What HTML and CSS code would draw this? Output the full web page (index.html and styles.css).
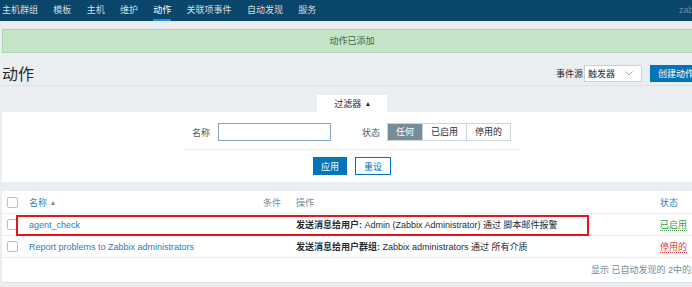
FILE: index.html
```html
<!DOCTYPE html>
<html lang="zh">
<head>
  <meta charset="UTF-8">
  <title>动作</title>
  <link rel="stylesheet" href="styles.css">
</head>
<body>
  <header class="topbar">
    <ul class="topnav">
      <li>主机群组</li>
      <li>模板</li>
      <li>主机</li>
      <li>维护</li>
      <li class="active">动作</li>
      <li>关联项事件</li>
      <li>自动发现</li>
      <li>服务</li>
    </ul>
    <span class="user">zabbix</span>
  </header>

  <main class="page">
    <div class="msg-good">动作已添加</div>

    <div class="page-head">
      <h1>动作</h1>
      <div class="head-controls">
        <label>事件源</label>
        <div class="select">
          <span>触发器</span>
          <svg width="8" height="5" viewBox="0 0 8 5"><polyline points="0.5,0.5 4,4 7.5,0.5" fill="none" stroke="#9aa7b0" stroke-width="1"/></svg>
        </div>
        <button class="btn">创建动作</button>
      </div>
    </div>

    <div class="filter">
      <div class="filter-tab">过滤器 <span class="tri"></span></div>
      <div class="filter-body">
        <div class="filter-grid">
          <label>名称</label>
          <input type="text" class="text-input">
          <label class="second">状态</label>
          <div class="radio-group">
            <span class="on">任何</span>
            <span>已启用</span>
            <span>停用的</span>
          </div>
        </div>
        <div class="filter-buttons">
          <button class="btn">应用</button>
          <button class="btn-alt">重设</button>
        </div>
      </div>
    </div>

    <div class="list">
      <table>
        <colgroup>
          <col class="c-check"><col class="c-name"><col class="c-cond"><col class="c-ops"><col class="c-status">
        </colgroup>
        <thead>
          <tr>
            <th><span class="checkbox"></span></th>
            <th class="sort">名称 <span class="tri"></span></th>
            <th>条件</th>
            <th>操作</th>
            <th class="sort">状态</th>
          </tr>
        </thead>
        <tbody>
          <tr>
            <td><span class="checkbox"></span></td>
            <td><a href="#">agent_check</a></td>
            <td></td>
            <td><b>发送消息给用户:</b> Admin (Zabbix Administrator) 通过 脚本邮件报警</td>
            <td><span class="status ok">已启用</span></td>
          </tr>
          <tr>
            <td><span class="checkbox"></span></td>
            <td><a href="#">Report problems to Zabbix administrators</a></td>
            <td></td>
            <td><b>发送消息给用户群组:</b> Zabbix administrators 通过 所有介质</td>
            <td><span class="status off">停用的</span></td>
          </tr>
        </tbody>
      </table>
      <div class="list-footer">显示 已自动发现的 2中的2</div>
      <div class="highlight"></div>
    </div>
  </main>
</body>
</html>
```

FILE: styles.css
```css
body { margin: 0; overflow: hidden; background: #ebeef0; font-family: "Liberation Sans", "Noto Sans CJK SC", sans-serif; font-size: 9px; color: #1f2c33; }

.topbar { display: flex; width: 712px; height: 21px; background: #0a466a; }
.topnav { display: flex; gap: 15.3px; margin: 0; padding: 0 0 0 2px; list-style: none; }
.topnav li { height: 21px; box-sizing: border-box; padding-top: 1px; line-height: 18px; border-bottom: 2px solid transparent; color: #d3dde4; }
.topnav li.active { color: #ffffff; border-bottom-color: #1d8fdc; }
.user { margin-left: auto; padding-right: 7px; line-height: 20px; color: #6f8ba0; }

.page { width: 700px; margin-left: 2px; }

.msg-good { margin-top: 8px; height: 24px; box-sizing: border-box; border: 1px solid #aed5b0; background: #c5e4c7; color: #42654a; text-align: center; line-height: 22px; }

.page-head { display: flex; align-items: center; height: 33px; box-sizing: border-box; padding-top: 8px; border-bottom: 1px solid #dde2e6; }
.page-head h1 { margin: 0; padding-top: 3px; font-size: 16px; font-weight: normal; line-height: 20px; color: #1f2c33; }
.head-controls { display: flex; align-items: center; margin-left: auto; }
.head-controls label { margin-right: 1px; color: #1f2c33; }
.select { display: flex; align-items: center; justify-content: space-between; width: 58px; height: 17px; box-sizing: border-box; padding: 0 8px 0 3px; border: 1px solid #c9d2d8; background: #fff; }
.btn { height: 17px; padding: 0 8px; margin-left: 8px; border: none; background: #0275b8; color: #fff; font: inherit; }

.tri { display: inline-block; width: 0; height: 0; border-left: 2.5px solid transparent; border-right: 2.5px solid transparent; border-bottom: 4px solid currentColor; vertical-align: 1px; }

.filter { margin-top: 9px; }
.filter-tab { width: 70px; height: 17px; margin: 0 auto; background: #fff; text-align: center; line-height: 18px; color: #1f2c33; }
.filter-tab .tri { margin-left: 2px; color: #1f2c33; }
.filter-body { height: 70px; box-sizing: border-box; padding-top: 11px; background: #fff; }
.filter-grid { display: flex; align-items: center; width: 336px; box-sizing: border-box; margin: 0 auto; padding: 0 8px 8px; border-bottom: 1px solid #ebeef0; }
.filter-grid label { color: #4f5a60; margin-right: 8px; }
.filter-grid label.second { margin-left: 31px; margin-right: 7px; }
.text-input { width: 113px; height: 18px; box-sizing: border-box; margin: 0; border: 1px solid #85a6c4; padding: 0 3px; font: inherit; }
.radio-group { display: flex; height: 18px; box-sizing: border-box; border: 1px solid #cdd5da; }
.radio-group span { padding: 0 8px; line-height: 16px; border-left: 1px solid #cdd5da; color: #1f2c33; }
.radio-group span:first-child { border-left: none; }
.radio-group span.on { background: #768d99; color: #fff; border-color: #768d99; }
.filter-buttons { display: flex; justify-content: center; gap: 8px; margin-top: 7px; }
.filter-buttons .btn { height: 18px; margin-left: 0; }
.btn-alt { height: 18px; padding: 0 8px; border: 1px solid #0275b8; background: #fff; color: #0275b8; font: inherit; }

.list { position: relative; margin-top: 9px; background: #fff; border-bottom: 1px solid #dde2e6; }
.list table { width: 700px; border-collapse: collapse; table-layout: fixed; }
.c-check { width: 22px; }
.c-name { width: 234px; }
.c-cond { width: 33px; }
.c-ops { width: 364px; }
.c-status { width: 47px; }
.list th, .list td { padding: 0 5px; text-align: left; white-space: nowrap; border-bottom: 1px solid #ebeef0; }
.list th { height: 22px; font-weight: normal; color: #768d99; }
.list th.sort { color: #3a7fbd; }
.list th .tri { margin-left: 1px; color: #768d99; }
.list td { height: 21px; }
.list a { color: #2b7bbf; text-decoration: none; }
.list b { font-weight: bold; }
.checkbox { display: block; width: 11px; height: 11px; box-sizing: border-box; border: 1px solid #b5c0c7; border-radius: 2px; background: #fff; }
.status { border-bottom: 1px dotted currentColor; }
.status.ok { color: #3d9a42; }
.status.off { color: #e2403d; }
.list-footer { height: 24px; line-height: 24px; text-align: right; padding-right: 6px; color: #768d99; }
.highlight { position: absolute; left: 14px; top: 24px; width: 573px; height: 21px; box-sizing: border-box; border: 2px solid #e8141b; }
```
